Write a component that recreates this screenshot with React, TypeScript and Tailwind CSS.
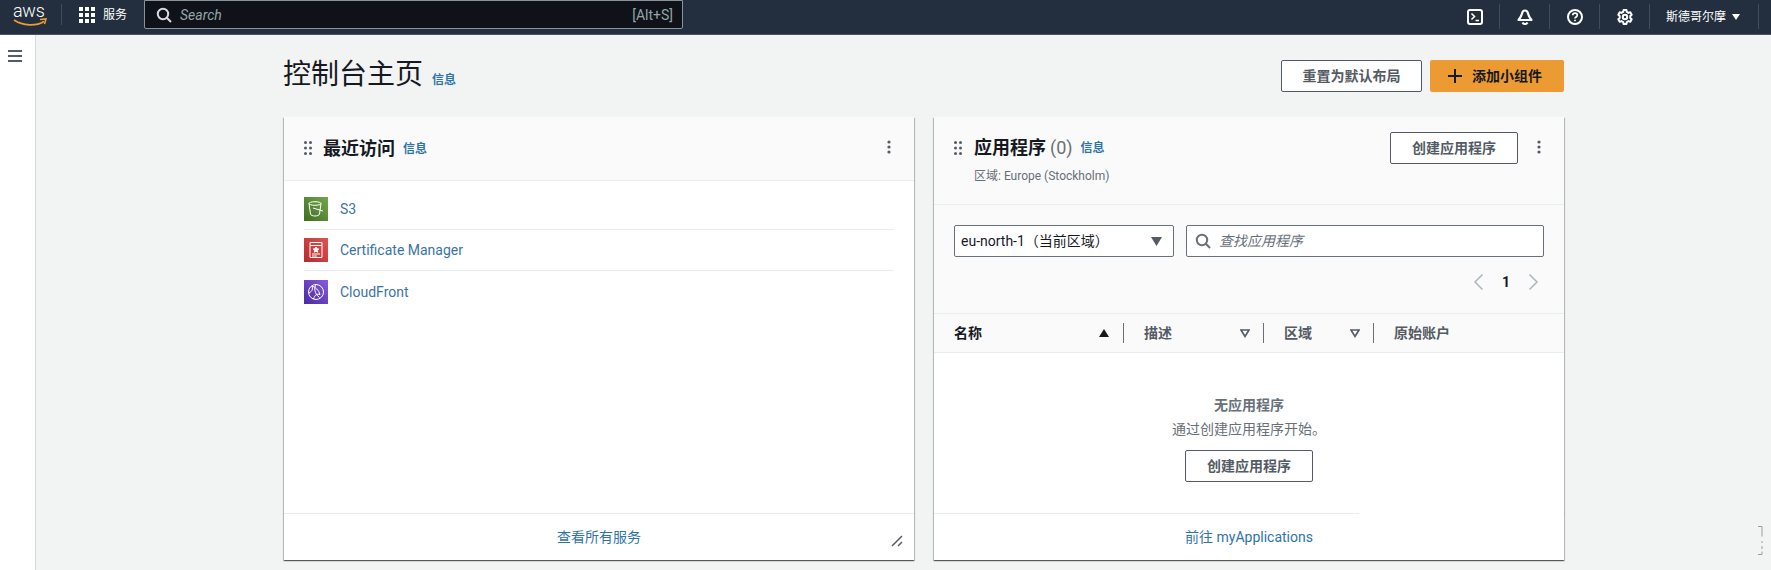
import type { ReactNode } from "react";

const font = "font-['Roboto','Noto_Sans_CJK_SC',sans-serif]";
const cardShadow = "shadow-[0_1px_1px_0_rgba(0,0,0,0.45),1px_1px_1px_0_rgba(0,0,0,0.18),-1px_1px_1px_0_rgba(0,0,0,0.18)]";

function Grip() {
  return (
    <svg width="8" height="14" viewBox="0 0 8 14" className="shrink-0 fill-[#545b64]">
      <circle cx="1.5" cy="1.5" r="1.5" />
      <circle cx="6.5" cy="1.5" r="1.5" />
      <circle cx="1.5" cy="7" r="1.5" />
      <circle cx="6.5" cy="7" r="1.5" />
      <circle cx="1.5" cy="12.5" r="1.5" />
      <circle cx="6.5" cy="12.5" r="1.5" />
    </svg>
  );
}

function Dots() {
  return (
    <svg width="4" height="14" viewBox="0 0 4 14" className="shrink-0 fill-[#545b64]">
      <circle cx="2" cy="2" r="1.6" />
      <circle cx="2" cy="7" r="1.6" />
      <circle cx="2" cy="12" r="1.6" />
    </svg>
  );
}

function SearchIcon({ color, size = 16 }: { color: string; size?: number }) {
  return (
    <svg width={size} height={size} viewBox="0 0 16 16" fill="none" stroke={color} strokeWidth="2" className="shrink-0">
      <circle cx="7" cy="7" r="5.2" />
      <path d="M10.8 10.8 15 15" />
    </svg>
  );
}

function Info({ className = "" }: { className?: string }) {
  return <span className={`text-xs font-bold text-[#2f74a8] ${className}`}>信息</span>;
}

function Button({ children, className = "" }: { children: ReactNode; className?: string }) {
  return (
    <div
      className={`flex h-8 items-center justify-center rounded-[2px] border border-[#545b64] bg-white text-sm font-bold text-[#545b64] ${className}`}
    >
      {children}
    </div>
  );
}

function AwsLogo() {
  return (
    <div className="relative ml-[13px] h-[24px] w-[35px]">
      <span className="block text-[18px] leading-[15px] font-light tracking-[-0.3px] text-white">aws</span>
      <svg width="35" height="10" viewBox="0 0 35 10" fill="none" className="absolute top-[15px] left-0">
        <path d="M1 2c9 6 22 6.500 30 1.500" stroke="#ec9a32" strokeWidth="1.800" />
        <path d="M27 1.500 33 1l-1.500 5" stroke="#ec9a32" strokeWidth="1.600" />
      </svg>
    </div>
  );
}

function GridIcon() {
  return (
    <svg width="16" height="16" viewBox="0 0 16 16" className="fill-white">
      <rect x="0" y="0" width="4" height="4" />
      <rect x="6" y="0" width="4" height="4" />
      <rect x="12" y="0" width="4" height="4" />
      <rect x="0" y="6" width="4" height="4" />
      <rect x="6" y="6" width="4" height="4" />
      <rect x="12" y="6" width="4" height="4" />
      <rect x="0" y="12" width="4" height="4" />
      <rect x="6" y="12" width="4" height="4" />
      <rect x="12" y="12" width="4" height="4" />
    </svg>
  );
}

function TerminalIcon() {
  return (
    <svg width="16" height="16" viewBox="0 0 16 16" fill="none" stroke="white" strokeWidth="2">
      <rect x="1" y="1" width="14" height="14" rx="2" />
      <path d="m4.500 4.500 3 3-3 3M8.500 11.500H12" strokeWidth="1.600" />
    </svg>
  );
}

function BellIcon() {
  return (
    <svg width="16" height="16" viewBox="0 0 16 16" fill="none" stroke="white" strokeWidth="2.200">
      <path d="M8 1.500c-1.800 0-2.700 1.300-3 3-.4 2.200-1.800 4.500-3.500 6.500h13C12.800 9 11.400 6.700 11 4.500c-.3-1.700-1.200-3-3-3Z" strokeLinejoin="round" />
      <path d="M5.500 13.500c.5 1 1.500 1.500 2.500 1.500s2-.5 2.500-1.500" />
    </svg>
  );
}

function HelpIcon() {
  return (
    <svg width="16" height="16" viewBox="0 0 16 16" fill="none" stroke="white" strokeWidth="2">
      <circle cx="8" cy="8" r="7" />
      <path d="M5.700 6.200C5.800 4.900 6.800 4.200 8 4.200c1.300 0 2.300.8 2.300 2 0 1.800-2.300 1.800-2.300 3.400" strokeWidth="1.700" />
      <path d="M8 10.800v1.500" strokeWidth="1.700" />
    </svg>
  );
}

function GearIcon() {
  return (
    <svg width="16" height="16" viewBox="0 0 16 16" fill="none" stroke="white" strokeWidth="2">
      <circle cx="8" cy="8" r="2.200" />
      <path d="m6.600 1-.4 1.900-1.700 1L2.700 3.300 1.300 5.700l1.400 1.300v2L1.300 10.300l1.400 2.400 1.800-.6 1.700 1 .4 1.900h2.800l.4-1.900 1.700-1 1.800.6 1.400-2.400L13.300 9V7l1.400-1.300-1.400-2.400-1.800.6-1.700-1L9.400 1Z" strokeLinejoin="round" />
    </svg>
  );
}

function HeaderIcon({ children }: { children: ReactNode }) {
  return <div className="flex h-[25px] w-[50px] items-center justify-center border-r border-[#414d5c]">{children}</div>;
}

function TopBar() {
  return (
    <header className="flex h-[35px] shrink-0 items-start border-b border-[#4a5462] bg-[#232f3e]">
      <div className="flex h-[29px] items-center">
        <AwsLogo />
        <div className="ml-[13px] h-[21px] w-px bg-[#414d5c]" />
        <div className="ml-[17px] flex items-center gap-2 text-xs text-white">
          <GridIcon />
          <span>服务</span>
        </div>
      </div>
      <div className="ml-[17px] flex h-[29px] w-[539px] items-center rounded-b-[2px] border border-[#879596] bg-[#0f1319] pr-[9px] pl-[11px] text-sm">
        <SearchIcon color="#d5dbdb" />
        <span className="ml-[8px] text-[#95a5a6] italic">Search</span>
        <span className="ml-auto text-[#95a5a6]">[Alt+S]</span>
      </div>
      <div className="mt-[4px] ml-auto flex items-center pr-[12px]">
        <HeaderIcon>
          <TerminalIcon />
        </HeaderIcon>
        <HeaderIcon>
          <BellIcon />
        </HeaderIcon>
        <HeaderIcon>
          <HelpIcon />
        </HeaderIcon>
        <HeaderIcon>
          <GearIcon />
        </HeaderIcon>
        <div className="flex h-[25px] w-[109px] items-center gap-[6px] border-r border-[#414d5c] pl-[16px] text-xs text-white">
          <span>斯德哥尔摩</span>
          <svg width="8" height="6" viewBox="0 0 8 6" className="fill-white">
            <path d="M0 0h8L4 6Z" />
          </svg>
        </div>
      </div>
    </header>
  );
}

function ServiceIcon({ name }: { name: "s3" | "acm" | "cf" }) {
  if (name === "s3") {
    return (
      <div className="flex size-6 shrink-0 items-center justify-center bg-gradient-to-tr from-[#3f6d25] to-[#74a84a]">
        <svg width="18" height="18" viewBox="0 0 18 18" fill="none" stroke="white" strokeWidth="1">
          <ellipse cx="8" cy="3.500" rx="6" ry="1.800" />
          <path d="M2 3.500 3.500 14c.2 1.300 2.500 2 4.500 2s4.300-.7 4.500-2L14 3.500" />
          <path d="m6 8 10 3" />
        </svg>
      </div>
    );
  }
  if (name === "acm") {
    return (
      <div className="flex size-6 shrink-0 items-center justify-center bg-gradient-to-tr from-[#b52b30] to-[#e05252]">
        <svg width="18" height="18" viewBox="0 0 18 18" fill="none" stroke="white" strokeWidth="1">
          <path d="M3 1.500h12v15H3zM3 4.500h12" />
          <path d="m9 6 .9 1.800 1.900.2-1.400 1.300.4 1.900L9 10.300l-1.800.9.400-1.900L6.200 8l1.900-.2Z" fill="white" />
          <path d="M5 13h8M5 15h5" />
        </svg>
      </div>
    );
  }
  return (
    <div className="flex size-6 shrink-0 items-center justify-center bg-gradient-to-tr from-[#4b2aa0] to-[#8a5ae0]">
      <svg width="18" height="18" viewBox="0 0 18 18" fill="none" stroke="white" strokeWidth="1">
        <circle cx="9" cy="9" r="7.500" />
        <path d="M5 3c1 3 .5 5-3 7M5 3c3 1 7 4 8 8.500M13 11.500c-3-1-5 0-6.500 4.500M9 1.500c-2 3-2 9 3.500 13" />
      </svg>
    </div>
  );
}

function CardFooter({ children }: { children: ReactNode }) {
  return (
    <div className="relative flex h-[47px] shrink-0 items-center justify-center border-t border-[#eaeded] text-sm text-[#2f74a8]">
      {children}
    </div>
  );
}

const recent: { name: string; icon: "s3" | "acm" | "cf" }[] = [
  { name: "S3", icon: "s3" },
  { name: "Certificate Manager", icon: "acm" },
  { name: "CloudFront", icon: "cf" },
];

function RecentCard() {
  return (
    <section className={`flex h-[443px] w-[630px] flex-col bg-white ${cardShadow}`}>
      <div className="flex h-[64px] shrink-0 items-start border-b border-[#eaeded] bg-[#fafafa] pt-[21px] pr-[23px] pl-5">
        <div className="mt-[3px]">
          <Grip />
        </div>
        <h2 className="ml-[11px] text-lg leading-[22px] font-bold text-[#16191f]">最近访问</h2>
        <Info className="mt-[3px] ml-2" />
        <div className="mt-[2px] ml-auto">
          <Dots />
        </div>
      </div>
      <div className="flex-1 px-5 pt-2">
        {recent.map((r, i) => (
          <div
            key={r.name}
            className={`flex h-[41px] items-center gap-3 text-sm text-[#3b74a3] ${i < recent.length - 1 ? "border-b border-[#eaeded]" : ""}`}
          >
            <ServiceIcon name={r.icon} />
            <span>{r.name}</span>
          </div>
        ))}
      </div>
      <CardFooter>
        <span>查看所有服务</span>
        <svg width="12" height="12" viewBox="0 0 12 12" stroke="#545b64" strokeWidth="1.500" className="absolute top-[21px] right-[11px]">
          <path d="M1 11 11 1M7 11l4-4" />
        </svg>
      </CardFooter>
    </section>
  );
}

function ApplicationsCard() {
  return (
    <section className={`relative flex h-[443px] w-[630px] flex-col bg-white ${cardShadow}`}>
      <div className="shrink-0 border-b border-[#eaeded] bg-[#fafafa]">
        <div className="flex h-[87px] items-start pt-[15px] pr-[23px] pl-5">
          <div className="mt-[9px]">
            <Grip />
          </div>
          <div className="ml-3">
            <div className="flex h-8 items-center">
              <h2 className="text-lg font-bold text-[#16191f]">应用程序</h2>
              <span className="ml-[4px] text-lg text-[#687078]">(0)</span>
              <Info className="ml-2" />
            </div>
            <p className="mt-[4px] text-xs text-[#687078]">区域: Europe (Stockholm)</p>
          </div>
          <Button className="ml-auto w-[128px]">创建应用程序</Button>
          <div className="mt-[8px] ml-[19px]">
            <Dots />
          </div>
        </div>
      </div>
      <div className="h-[109px] shrink-0 border-b border-[#eaeded] bg-[#fafafa] px-5 pt-5">
        <div className="flex gap-3">
          <div className="flex h-8 w-[220px] items-center rounded-[2px] border border-[#687078] bg-white pr-[11px] pl-[6px] text-sm text-[#16191f]">
            <span>eu-north-1（当前区域）</span>
            <svg width="11" height="9" viewBox="0 0 11 9" className="ml-auto fill-[#545b64]">
              <path d="M0 0h11L5.500 9Z" />
            </svg>
          </div>
          <div className="flex h-8 w-[358px] items-center rounded-[2px] border border-[#687078] bg-white pl-[8px] text-sm">
            <SearchIcon color="#687078" />
            <span className="ml-2 text-[#687078] italic">查找应用程序</span>
          </div>
        </div>
        <div className="mt-[15px] flex items-center justify-end pr-[5px] text-sm font-bold text-[#16191f]">
          <svg width="11" height="18" viewBox="0 0 11 18" fill="none" stroke="#aab7b8" strokeWidth="1.500">
            <path d="M9.500 1.500 2 9l7.500 7.500" />
          </svg>
          <span className="mx-[18px]">1</span>
          <svg width="11" height="18" viewBox="0 0 11 18" fill="none" stroke="#aab7b8" strokeWidth="1.500">
            <path d="M1.500 1.500 9 9l-7.500 7.500" />
          </svg>
        </div>
      </div>
      <div className="flex h-[39px] shrink-0 items-center border-b border-[#eaeded] bg-[#fafafa] pl-5 text-sm font-bold text-[#545b64]">
        <div className="flex h-5 w-[170px] items-center justify-between border-r border-[#687078] pr-[14px]">
          <span className="text-[#16191f]">名称</span>
          <svg width="10" height="8" viewBox="0 0 10 8" className="fill-[#16191f]">
            <path d="M0 8h10L5 0Z" />
          </svg>
        </div>
        <div className="flex h-5 w-[140px] items-center justify-between border-r border-[#687078] pr-[13px] pl-[20px]">
          <span>描述</span>
          <svg width="10" height="9" viewBox="0 0 10 9" fill="none" stroke="#545b64" strokeWidth="1.600">
            <path d="M1 1h8L5 7.500Z" />
          </svg>
        </div>
        <div className="flex h-5 w-[110px] items-center justify-between border-r border-[#687078] pr-[13px] pl-[20px]">
          <span>区域</span>
          <svg width="10" height="9" viewBox="0 0 10 9" fill="none" stroke="#545b64" strokeWidth="1.600">
            <path d="M1 1h8L5 7.500Z" />
          </svg>
        </div>
        <span className="pl-[20px]">原始账户</span>
      </div>
      <div className="flex flex-1 flex-col items-center pt-[42px] text-sm text-[#687078]">
        <p className="leading-[20px] font-bold">无应用程序</p>
        <p className="mt-[4px] leading-[20px]">通过创建应用程序开始。</p>
        <Button className="mt-[11px] w-[128px]">创建应用程序</Button>
      </div>
      <CardFooter>
        <span>前往 myApplications</span>
      </CardFooter>
      {/* smudged bottom right corner of the screenshot */}
      <div className="absolute top-[380px] right-[1px] bottom-[2px] w-[204px] bg-white" />
    </section>
  );
}

export default function App() {
  return (
    <div className={`relative flex h-[570px] w-[1771px] flex-col overflow-hidden bg-[#f2f3f3] ${font}`}>
      <TopBar />
      <div className="flex flex-1">
        <aside className="w-[36px] shrink-0 border-r border-[#d5dbdb] bg-white pt-[15px] pl-2">
          <svg width="14" height="12" viewBox="0 0 14 12" className="fill-[#545b64]">
            <rect y="0" width="14" height="2" />
            <rect y="5" width="14" height="2" />
            <rect y="10" width="14" height="2" />
          </svg>
        </aside>
        <main className="pt-[25px] pl-[248px]">
          <div className="flex h-8 w-[1280px] items-center">
            <h1 className="-mt-[2px] -ml-[1px] text-[28px] leading-8 text-[#16191f]">控制台主页</h1>
            <Info className="mt-[8px] ml-[9px]" />
            <Button className="ml-auto w-[141px]">重置为默认布局</Button>
            <div className="ml-2 flex h-8 w-[134px] items-center gap-[10px] rounded-[2px] bg-[#ec9a32] pl-[18px] text-sm font-bold text-[#16191f]">
              <svg width="14" height="14" viewBox="0 0 14 14" stroke="#16191f" strokeWidth="2">
                <path d="M7 0v14M0 7h14" />
              </svg>
              <span>添加小组件</span>
            </div>
          </div>
          <div className="mt-[25px] flex gap-5">
            <RecentCard />
            <ApplicationsCard />
          </div>
        </main>
      </div>
      <svg width="6" height="30" viewBox="0 0 6 30" fill="none" stroke="#9aa0a0" strokeWidth="1" className="absolute top-[526px] left-[1758px]">
        <path d="M0 .5h4v10M4 15v2M4 20v3M0 28.500h4v-3" />
      </svg>
    </div>
  );
}
